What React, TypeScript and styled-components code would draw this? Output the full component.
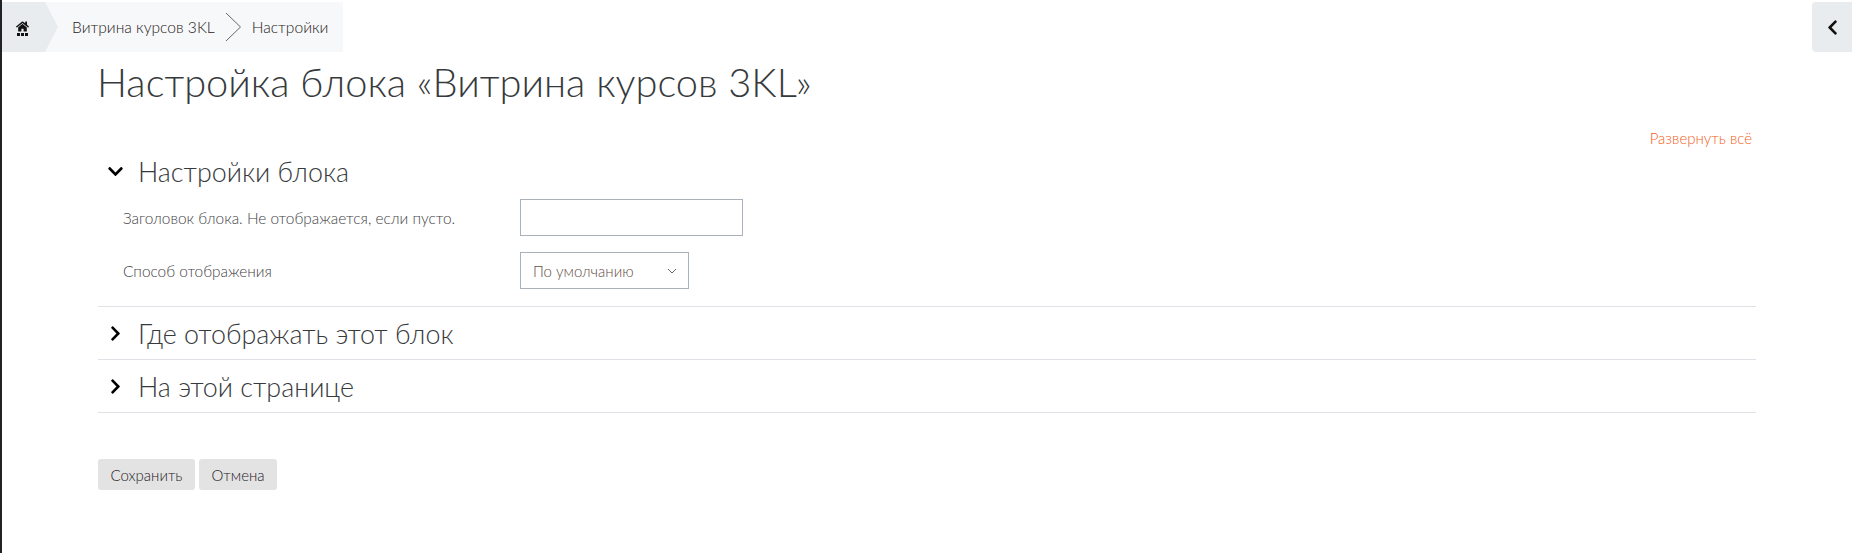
import React from 'react';
import styled, { createGlobalStyle } from 'styled-components';
import { FaChevronDown, FaChevronLeft, FaChevronRight, FaHome } from 'react-icons/fa';

const GlobalStyle = createGlobalStyle`
  html, body {
    margin: 0;
    padding: 0;
    background: #fff;
    font-family: 'Lato', 'Open Sans', sans-serif;
    font-weight: 300;
    color: #373a3c;
  }
`;

const sections = [
  { title: 'Где отображать этот блок' },
  { title: 'На этой странице' },
];

const App = () => (
  <>
    <GlobalStyle />
    <Page>
      <TopBar>
        <Breadcrumb>
          <HomeCrumb>
            <HomeIcon>
              <FaHome size={13} />
              <Dots>
                <i />
                <i />
                <i />
              </Dots>
            </HomeIcon>
          </HomeCrumb>
          <CrumbLink>Витрина курсов 3KL</CrumbLink>
          <CrumbSeparator width="17" height="30" viewBox="0 0 17 30">
            <path d="M1 1 L15.5 15 L1 29" fill="none" stroke="#666" strokeWidth="1" />
          </CrumbSeparator>
          <CrumbCurrent>Настройки</CrumbCurrent>
        </Breadcrumb>
        <DrawerToggle>
          <FaChevronLeft size={17} />
        </DrawerToggle>
      </TopBar>

      <Content>
        <Title>Настройка блока «Витрина курсов 3KL»</Title>
        <ExpandRow>
          <ExpandLink>Развернуть всё</ExpandLink>
        </ExpandRow>

        <Section>
          <SectionHeader>
            <Chevron>
              <FaChevronDown size={17} />
            </Chevron>
            <SectionTitle>Настройки блока</SectionTitle>
          </SectionHeader>
          <FormRow>
            <FieldLabel>Заголовок блока. Не отображается, если пусто.</FieldLabel>
            <TextInput type="text" />
          </FormRow>
          <FormRow>
            <FieldLabel>Способ отображения</FieldLabel>
            <SelectBox>
              <span>По умолчанию</span>
              <svg width="10" height="6" viewBox="0 0 10 6">
                <path d="M1 1 L5 5 L9 1" fill="none" stroke="#666" strokeWidth="1" />
              </svg>
            </SelectBox>
          </FormRow>
        </Section>

        {sections.map((s) => (
          <CollapsedSection key={s.title}>
            <SectionHeader>
              <Chevron>
                <FaChevronRight size={17} />
              </Chevron>
              <SectionTitle>{s.title}</SectionTitle>
            </SectionHeader>
          </CollapsedSection>
        ))}

        <Buttons>
          <Button>Сохранить</Button>
          <Button>Отмена</Button>
        </Buttons>
      </Content>
    </Page>
  </>
);

export default App;

// ── Styled Components ──

const Page = styled.div`
  height: 553px;
  box-sizing: border-box;
  border-left: 2px solid #222;
  padding-top: 2px;
  overflow: hidden;
`;

const TopBar = styled.div`
  display: flex;
  justify-content: space-between;
  align-items: flex-start;
`;

const Breadcrumb = styled.nav`
  display: flex;
  align-items: center;
  width: 341px;
  height: 50px;
  background: #f7f8f9;
  font-size: 15.6px;
  font-weight: 300;
  color: #1f2123;
`;

const HomeCrumb = styled.div`
  width: 56px;
  height: 50px;
  display: flex;
  align-items: center;
  background: #e9ecef;
  clip-path: polygon(0 0, 43px 0, 100% 50%, 43px 100%, 0 100%);
  padding-left: 14px;
  box-sizing: border-box;
`;

const HomeIcon = styled.div`
  display: flex;
  flex-direction: column;
  align-items: center;
  color: #111;
  margin-top: 2px;
`;

const Dots = styled.div`
  display: flex;
  gap: 1px;

  i {
    width: 3px;
    height: 3px;
    background: #111;
  }
`;

const CrumbLink = styled.span`
  margin-left: 14px;
`;

const CrumbSeparator = styled.svg`
  margin: 0 10px;
`;

const CrumbCurrent = styled.span``;

const DrawerToggle = styled.div`
  width: 40px;
  height: 50px;
  display: flex;
  align-items: center;
  justify-content: center;
  background: #e9ecef;
  border-radius: 4px 0 0 4px;
  color: #111;
`;

const Content = styled.main`
  width: 1658px;
  margin-left: 96px;
`;

const Title = styled.h1`
  margin: 6px 0 0 -1px;
  font-size: 39.8px;
  line-height: 48px;
  font-weight: 300;
`;

const ExpandRow = styled.div`
  display: flex;
  justify-content: flex-end;
  padding-right: 4px;
  margin-top: 22px;
`;

const ExpandLink = styled.a`
  font-size: 15px;
  line-height: 21px;
  font-weight: 300;
  color: #f2601a;
`;

const Section = styled.section`
  border-bottom: 1px solid #dee2e6;
  padding-bottom: 17px;
  padding-top: 4px;
`;

const CollapsedSection = styled.section`
  border-bottom: 1px solid #dee2e6;
  padding: 8px 0;
`;

const SectionHeader = styled.div`
  display: flex;
  align-items: center;
  height: 36px;
`;

const Chevron = styled.span`
  width: 40px;
  display: flex;
  padding-left: 9px;
  box-sizing: border-box;
  color: #000;
`;

const SectionTitle = styled.h3`
  margin: 0;
  font-size: 26.9px;
  font-weight: 300;
`;

const FormRow = styled.div`
  display: flex;
  align-items: center;
  padding-left: 25px;
  margin-top: 16px;

  ${SectionHeader} + & {
    margin-top: 10px;
  }
`;

const FieldLabel = styled.label`
  width: 397px;
  font-size: 15.4px;
  color: #3f4245;
  font-weight: 300;
`;

const TextInput = styled.input`
  width: 223px;
  height: 37px;
  box-sizing: border-box;
  border: 1px solid #a9b2bb;
  background: #fff;
  outline: none;
`;

const SelectBox = styled.div`
  width: 169px;
  height: 37px;
  box-sizing: border-box;
  border: 1px solid #a9b2bb;
  display: flex;
  align-items: center;
  justify-content: space-between;
  padding: 0 11px 0 12px;
  font-size: 15px;
  font-weight: 300;
  color: #5f4e46;
`;

const Buttons = styled.div`
  display: flex;
  gap: 4px;
  margin-top: 46px;
`;

const Button = styled.button`
  height: 31px;
  padding: 0 12.5px;
  border: none;
  border-radius: 3px;
  background: #e3e3e3;
  color: #1f2123;
  font-family: inherit;
  font-size: 15px;
  font-weight: 300;
`;
